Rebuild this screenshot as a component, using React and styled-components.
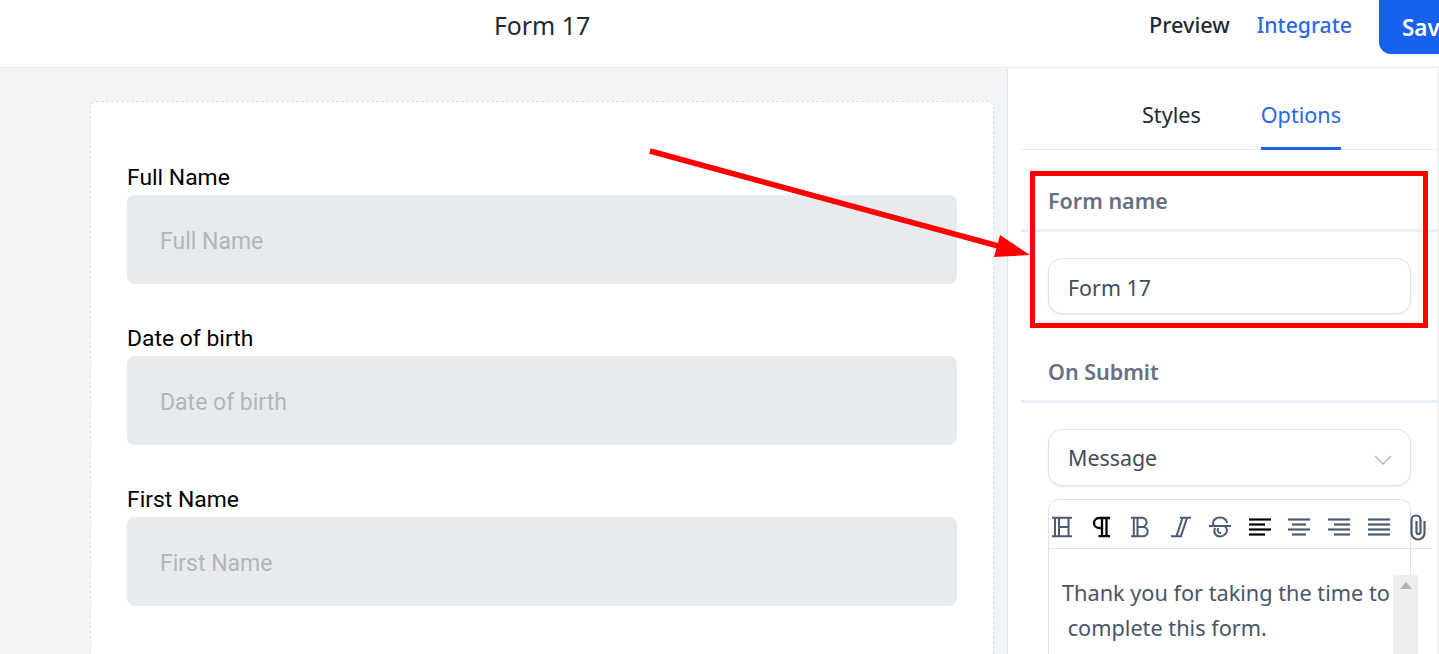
import React from "react";
import styled, { createGlobalStyle } from "styled-components";

const Global = createGlobalStyle`
  html, body { margin: 0; padding: 0; width: 1439px; height: 654px; overflow: hidden; background: #fff; }
  * { box-sizing: border-box; }
`;
const uiFont = `"Noto Sans", "Open Sans", sans-serif`;

const Page = styled.div`
  position: relative; width: 1439px; height: 654px; overflow: hidden;
  display: flex; flex-direction: column; font-family: ${uiFont};
`;
const Header = styled.header`
  flex: none; height: 68px; border-bottom: 1px solid #e5e7eb; background: #fff;
  display: grid; grid-template-columns: 1149px auto; overflow: hidden;
`;
const Title = styled.div`
  padding-left: 494px; font-size: 24.8px; line-height: 50px; color: #1f2937;
`;
const Actions = styled.div`display: flex; gap: 27px; align-items: flex-start; width: 400px;`;
const HeaderLink = styled.a`
  font-size: ${p => p.$blue ? 21.2 : 21.7}px; font-weight: 500; line-height: 50px;
  color: ${p => p.$blue ? "#2f66e8" : "#1f2937"};
`;
const SaveButton = styled.button`
  margin-top: -10px; width: 110px; height: 64px; border: 0; border-radius: 12px;
  background: #1860ee; color: #fff; font: 600 22.5px ${uiFont}; text-align: left; padding: 10px 0 0 23px;
`;
const Body = styled.div`flex: 1; display: flex; min-height: 0;`;
const Canvas = styled.main`
  width: 1007px; flex: none; background: #f3f4f6; padding: 33px 13px 0 90px;
`;
const Card = styled.div`
  height: 700px; background: #fff; border: 1px dashed #cfe2f0; border-radius: 6px;
  padding: 59px 36px 0 36px; display: flex; flex-direction: column; gap: 38px;
  font-family: Roboto, sans-serif;
`;
const Field = styled.div`display: flex; flex-direction: column;`;
const FieldLabel = styled.label`font-size: 22.9px; line-height: 34px; height: 34px; color: #000;`;
const FieldInput = styled.div`
  height: 89px; background: #e8ebee; border-radius: 8px; padding-left: 33px;
  font-size: 23px; line-height: 93px; color: #b1b6b9;
`;
const Panel = styled.aside`
  flex: 1; min-width: 0; border-left: 1px solid #e5e7eb; border-right: 1px solid #e5e7eb;
  padding-left: 13px; display: flex; flex-direction: column;
`;
const Tabs = styled.div`
  height: 82px; flex: none; display: flex; justify-content: center; gap: 60px; padding-left: 24px;
  border-bottom: 1px solid #e9ebef;
`;
const Tab = styled.div`
  height: 82px; padding-top: 28px; font-size: 21.6px; line-height: 38px;
  color: ${p => p.$active ? "#2f66e8" : "#1f2937"};
  border-bottom: 3px solid ${p => p.$active ? "#1d5fe8" : "transparent"};
`;
const SectionHead = styled.div`
  flex: none; height: ${p => p.$h}px; border-bottom: 3px solid #e6f1fc; padding: ${p => p.$top}px 0 0 27px;
  font-size: 21.5px; line-height: 34px; font-weight: 600; color: #667085;
`;
const Box = styled.div`
  flex: none; margin: ${p => p.$mt}px 27px 0 27px; height: ${p => p.$h}px; width: 363px;
  border: 1px solid #dfe1e7; border-radius: 14px; box-shadow: 0 1px 2px rgba(0,0,0,.07);
  padding: ${p => p.$pt}px 0 0 19px; display: flex; align-items: center; justify-content: space-between;
  font-size: 21.4px; color: #434c5b; background: #fff;
`;
const Chevron = styled.span`display: flex; margin: 4px 18px 0 0; color: #b8bcc2;`;
const Editor = styled.div`
  flex: none; position: relative; margin: 13px 0 0 27px; width: 363px; height: 200px;
  border: 1px solid #e2e4e9; border-bottom: 0; border-radius: 10px 10px 0 0;
`;
const Toolbar = styled.div`
  width: 383px; height: 49px; border-bottom: 1px solid #e2e4e9; display: flex; align-items: center;
  padding-top: 6px;
`;
const ToolRow = styled.div`display: flex; margin-left: -7px;`;
const Tool = styled.span`
  width: 39.6px; height: 24px; flex: none; display: flex; align-items: center; justify-content: center;
  color: ${p => p.$active ? "#000" : "#4b5a73"};
`;
const EditorText = styled.div`
  padding: 26px 0 0 13px; font-size: 21.7px; line-height: 35px; color: #4a5568;
  white-space: pre;
`;
const Scrollbar = styled.div`
  position: absolute; left: 344px; top: 75px; width: 25px; height: 90px; background: #eeeeee;
  display: flex; justify-content: center; padding-top: 7px;
`;
const ScrollArrow = styled.span`
  width: 0; height: 0; border-left: 6px solid transparent; border-right: 6px solid transparent;
  border-bottom: 7px solid #b4b4b4;
`;
const RedBox = styled.div`
  position: absolute; left: 1030px; top: 171px; width: 398px; height: 157px; border: 5px solid #ff0000;
`;
const ArrowSvg = styled.svg`position: absolute; left: 0; top: 0; pointer-events: none;`;
const IconSvg = styled.svg`overflow: visible; flex: none;`;

const I = ({ children, w = 2 }) => (
  <IconSvg width="24" height="24" viewBox="0 0 24 24" fill="none" stroke="currentColor" strokeWidth={w}>{children}</IconSvg>
);
const Lines = ({ rows }) => (
  <I w={2.2}>
    {rows.map(([a, b], i) => <path key={i} d={`M${a} ${4.5 + i * 5}H${b}`} />)}
  </I>
);

const tools = [
  <I><path d="M2 2.700H22M2 21.300H22M5 2.700V21.300M9 2.700V21.300M18.500 2.700V21.300M9 12H18.500" /></I>,
  <I w={2.3}><path d="M21 3H10a5 5 0 0 0 0 10H13M13 3V21M17.500 3V21M9.500 21.200H21" /></I>,
  <I><path d="M2 2.700H13a4.600 4.600 0 0 1 0 9.200H8.500M8.500 11.900H14a4.700 4.700 0 0 1 0 9.400H2M4.800 2.700V21.300M8.500 2.700V21.300" /></I>,
  <I><path d="M11 2.700H22M2 21.300H13M7.500 21L13.500 3M12 21L18 3" /></I>,
  <I><path d="M1 11H23M19 8C19 5 16 2.500 12 2.500S5 5 5 8C5 9 5.500 10 6 11M7 13C5 18 8 21.500 12 21.500S19 18 19 15C19 13 18 12 16.500 11M10 13C9 16 10 18 13 18" /></I>,
  <Lines rows={[[1, 23], [1, 17], [1, 23], [1, 17]]} />,
  <Lines rows={[[1, 23], [5, 19], [1, 23], [5, 19]]} />,
  <Lines rows={[[1, 23], [7, 23], [1, 23], [7, 23]]} />,
  <Lines rows={[[1, 23], [1, 23], [1, 23], [1, 23]]} />,
  <I w={2.2}><path d="M18.500 6V18a6.500 6.500 0 0 1-13 0V5a4.500 4.500 0 0 1 9 0V17a2 2 0 0 1-4 0V6" /></I>,
];

export default function App() {
  return (
    <Page>
      <Global />
      <Header>
        <Title>Form 17</Title>
        <Actions>
          <HeaderLink>Preview</HeaderLink>
          <HeaderLink $blue>Integrate</HeaderLink>
          <SaveButton>Save</SaveButton>
        </Actions>
      </Header>
      <Body>
        <Canvas>
          <Card>
            {["Full Name", "Date of birth", "First Name"].map((n) => (
              <Field key={n}>
                <FieldLabel>{n}</FieldLabel>
                <FieldInput>{n}</FieldInput>
              </Field>
            ))}
          </Card>
        </Canvas>
        <Panel>
          <Tabs>
            <Tab>Styles</Tab>
            <Tab $active>Options</Tab>
          </Tabs>
          <SectionHead $h={82} $top={34}>Form name</SectionHead>
          <Box $mt={26} $h={56} $pt={2}>Form 17</Box>
          <SectionHead $h={89} $top={41}>On Submit</SectionHead>
          <Box $mt={26} $h={57} $pt={0}>
            Message
            <Chevron>
              <svg width="18" height="10" viewBox="0 0 18 10" fill="none" stroke="currentColor" strokeWidth="1.500"><path d="M1 1l8 8 8-8" /></svg>
            </Chevron>
          </Box>
          <Editor>
            <Toolbar>
              <ToolRow>
                {tools.map((t, i) => <Tool key={i} $active={i === 1 || i === 5}>{t}</Tool>)}
              </ToolRow>
            </Toolbar>
            <EditorText>{"Thank you for taking the time to\n complete this form."}</EditorText>
            <Scrollbar><ScrollArrow /></Scrollbar>
          </Editor>
        </Panel>
      </Body>
      <RedBox />
      <ArrowSvg width="1439" height="654">
        <path d="M650 151 L1002 247" stroke="#ff0000" strokeWidth="5.500" fill="none" />
        <path d="M1000 235 L1030 255 L994 257 Z" fill="#ff0000" />
      </ArrowSvg>
    </Page>
  );
}
